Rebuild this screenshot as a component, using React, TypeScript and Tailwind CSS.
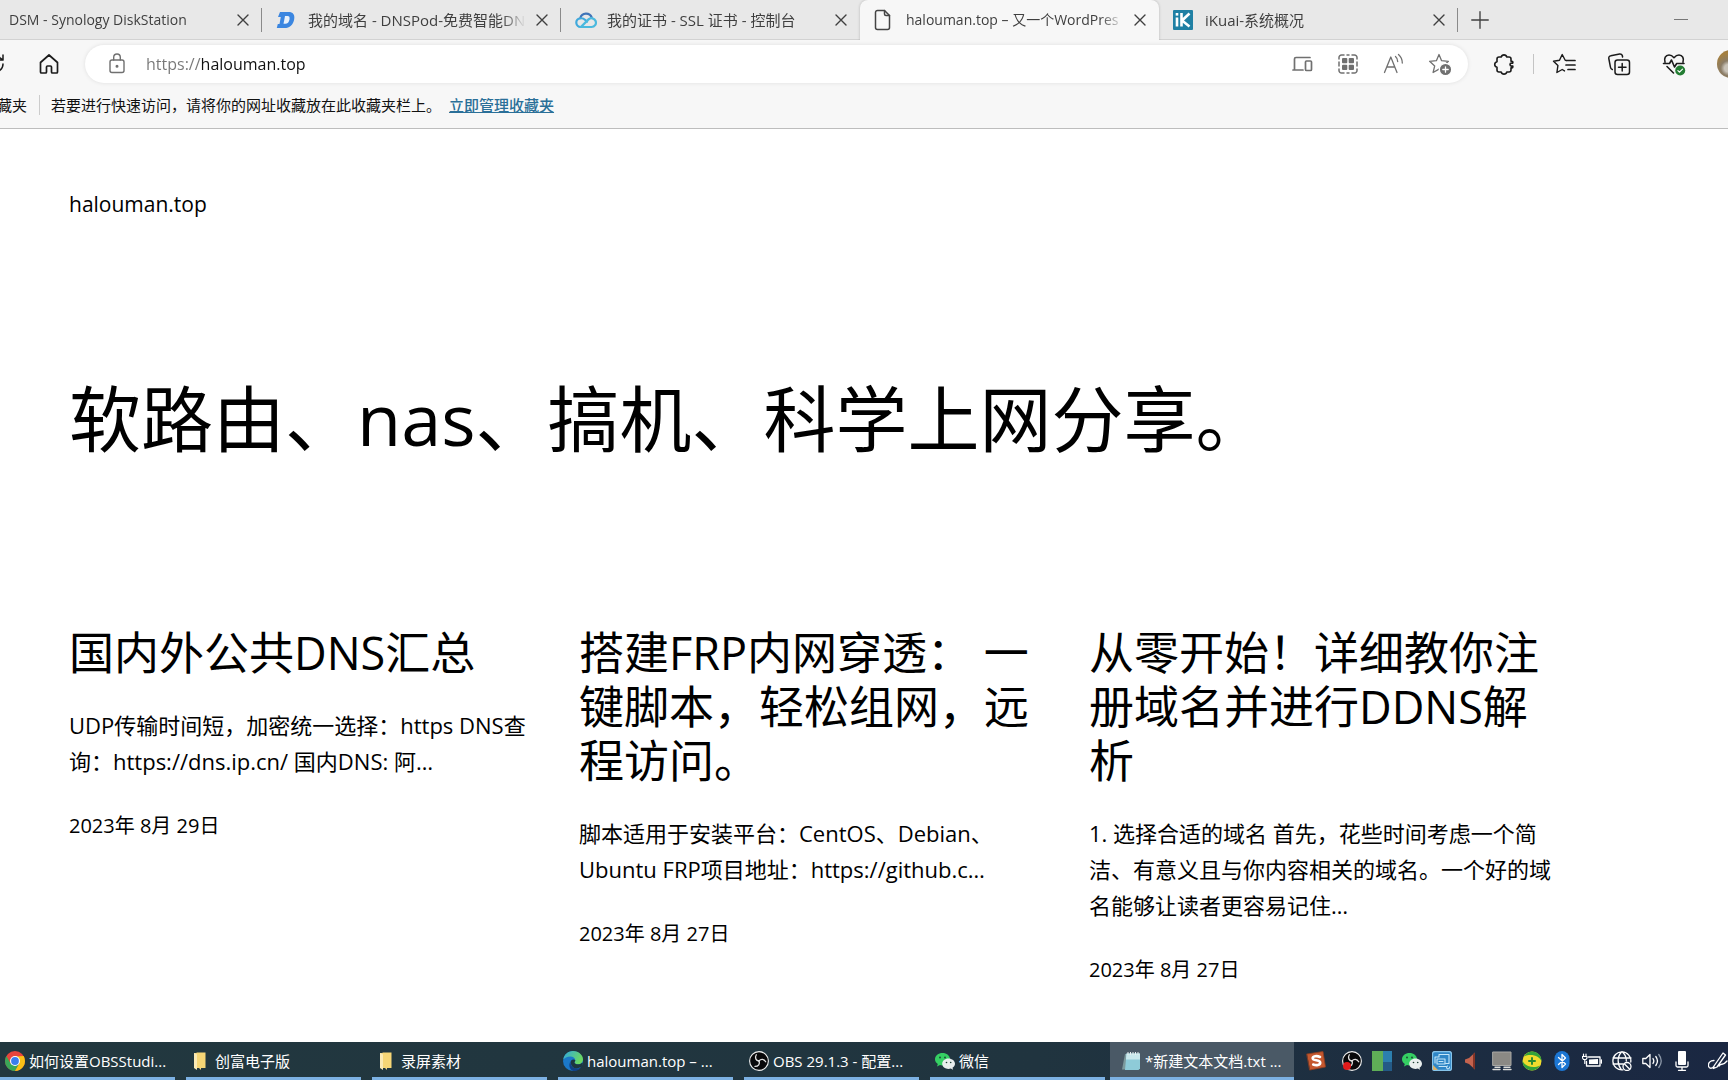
import React from "react";
import type { ReactNode } from "react";

type IconProps = { className?: string };

const line = { fill: "none", stroke: "currentColor", strokeLinecap: "round", strokeLinejoin: "round" } as const;

/* ---------- Tab icons ---------- */

const DnspodIcon = () => (
  <svg viewBox="0 0 20 20" className="size-5" aria-hidden="true">
    <path d="M4 2h8.500c4.500 0 6.500 2.700 5.700 7.200C17.200 15 13.800 18 8.500 18H.8l1-4h1.700l1.300-7H2z" fill="#3b86e0" />
    <path d="M9 6h2.500c1.800 0 2.300 1.200 2 3.200-.5 3-1.900 4.600-4.300 4.600H7.500z" fill="#e8f1fb" />
  </svg>
);

const CloudIcon = () => (
  <svg viewBox="0 0 22 20" className="h-5 w-[22px]" fill="none" strokeWidth="2.200" strokeLinecap="round" aria-hidden="true">
    <path d="M5.300 8A6 6 0 0 1 16.700 7.500" stroke="#3f74b8" />
    <path d="M6 17a4.300 4.300 0 0 1-.7-8.700c2-.3 3.700.5 5 1.700l1.700 1.700" stroke="#3fa9dc" />
    <path d="M6 17h10.500a4.400 4.400 0 1 0-3-7.600z" stroke="#4bb9de" />
  </svg>
);

const PageIcon = () => (
  <svg viewBox="0 0 18 22" className="h-[22px] w-[18px] text-[#444]" {...line} strokeWidth="1.500" aria-hidden="true">
    <path d="M3.500 1.500h7l5 5v12a2 2 0 0 1-2 2h-10a2 2 0 0 1-2-2v-15a2 2 0 0 1 2-2z" />
    <path d="M10.500 1.500v3.500a1.500 1.500 0 0 0 1.500 1.500h3.500" />
  </svg>
);

const IkuaiIcon = () => (
  <svg viewBox="0 0 20 20" className="size-5" aria-hidden="true">
    <rect width="20" height="20" rx="1" fill="#2080a4" />
    <path d="M4 7.500v9M8.500 3v13.500M16.500 3.500l-7.500 7 7.500 6" fill="none" stroke="#fff" strokeWidth="2.600" />
    <rect x="2.700" y="3" width="2.600" height="2.600" fill="#fff" />
  </svg>
);

const Cross = () => (
  <svg viewBox="0 0 12 12" className="size-3" {...line} strokeWidth="1.400" aria-hidden="true">
    <path d="M1 1l10 10M11 1L1 11" />
  </svg>
);

/* ---------- Toolbar icons ---------- */

const Svg = ({ children, className = "size-6", sw = 1.5 }: { children: ReactNode; className?: string; sw?: number }) => (
  <svg viewBox="0 0 24 24" className={className} {...line} strokeWidth={sw} aria-hidden="true">
    {children}
  </svg>
);

const ReloadIcon = () => (
  <Svg>
    <path d="M20 12a8 8 0 1 1-3-6.200L20 8M20 3v5h-5" />
  </Svg>
);
const HomeIcon = () => (
  <Svg sw={1.7}>
    <path d="M3.500 10.500L12 3l8.500 7.500V20a1 1 0 0 1-1 1h-4a1 1 0 0 1-1-1v-5a1 1 0 0 0-1-1h-3a1 1 0 0 0-1 1v5a1 1 0 0 1-1 1h-4a1 1 0 0 1-1-1z" />
  </Svg>
);
const LockIcon = () => (
  <Svg sw={1.4}>
    <rect x="5" y="8" width="14" height="12.500" rx="2" />
    <path d="M8.700 8V5.300a3.300 3.300 0 0 1 6.600 0V8" />
    <circle cx="12" cy="14.300" r=".8" fill="currentColor" />
  </Svg>
);
const DevicesIcon = () => (
  <Svg sw={1.7}>
    <path d="M13 18H3M4.500 17.500V7A1.500 1.500 0 0 1 6 5.500h14" />
    <rect x="15.500" y="9" width="6" height="9.500" rx="1" />
  </Svg>
);
const GridIcon = () => (
  <Svg>
    <path d="M3 7V5.500A2.500 2.500 0 0 1 5.500 3H8M16 3h2.500A2.500 2.500 0 0 1 21 5.500V7M21 17v1.500a2.500 2.500 0 0 1-2.500 2.500H16M8 21H5.500A2.500 2.500 0 0 1 3 18.500V17M3 10v4M21 10v4M11 3h2M11 21h2" />
    <g fill="currentColor" stroke="none">
      <rect x="6" y="6" width="5.300" height="5.300" rx="1" />
      <rect x="12.700" y="6" width="5.300" height="5.300" rx="1" />
      <rect x="6" y="12.700" width="5.300" height="5.300" rx="1" />
      <rect x="12.700" y="12.700" width="5.300" height="5.300" rx="1" />
    </g>
  </Svg>
);
const ReadAloudIcon = () => (
  <Svg sw={1.3}>
    <path d="M2.500 20.500L8.800 5l6.200 15.500M4.700 15h8.100M13.500 4.500c1.500 1.300 2.200 3 2.200 5M16.500 2.500c2.600 2.300 3.800 5 3.800 8.500" />
  </Svg>
);
const STAR = "M11 2.500l2.600 6.200 6.800.6-5 4.600 1.500 6.600-5.900-3.400-5.900 3.400 1.600-6.600-5.100-4.600 6.800-.6z";
const StarAddIcon = () => (
  <Svg sw={1.3}>
    <path d={STAR} />
    <circle cx="17.500" cy="17.500" r="6.200" fill="currentColor" stroke="#fff" />
    <path d="M14.800 17.500h5.400M17.500 14.800v5.400" stroke="#fff" />
  </Svg>
);
const PuzzleIcon = () => (
  <Svg sw={1.6}>
    <path d="M7 5h2.200a2.900 2.900 0 0 1 5.600 0H17a2 2 0 0 1 2 2v2.300h1a.8.800 0 0 1 .8.800v1h-1.300a1.500 1.500 0 0 0 0 3h1.300v1a.8.800 0 0 1-.8.800h-1V18a2 2 0 0 1-2 2h-2.200a2.900 2.900 0 0 1-5.600 0H7a2 2 0 0 1-2-2v-2.800a2.800 2.800 0 0 1 0-5.500V7a2 2 0 0 1 2-2z" />
  </Svg>
);
const FavoritesIcon = () => (
  <Svg sw={1.4}>
    <path d="M14.500 8.500l-1.300-.2L10.200 2.500 7.500 8.300l-6 .9 4.400 4.400-1 6.900 5.300-3 2.300 1.400" />
    <path d="M15 8.500h8M14 13h9M16 17.500h7" strokeWidth="1.700" />
  </Svg>
);
const CollectionsIcon = () => (
  <Svg>
    <rect x="8" y="8" width="14.500" height="14.500" rx="2.500" />
    <path d="M15.200 11.500v7.500M11.500 15.200h7.500M5.300 17.500A2.500 2.500 0 0 1 3.500 15.300L1.800 6.500a2.400 2.400 0 0 1 2-2.800l8.800-1.700a2.400 2.400 0 0 1 2.800 2l.2 1" />
  </Svg>
);
const HealthIcon = () => (
  <Svg sw={1.6}>
    <path d="M3 10C1.800 6.500 3.500 3 7 3c2.200 0 3.700 1.200 5 2.700C13.300 4.200 14.800 3 17 3c3.500 0 5.200 3.500 4 7M5 14.500l6.500 6.500M1.500 11.500h6l2-3.500 3 7 2.200-3.500H22" />
    <circle cx="18.200" cy="18.500" r="5" fill="#237d33" stroke="none" />
    <path d="M15.900 18.600l1.600 1.600 3-3.100" stroke="#fff" strokeWidth="1.200" />
  </Svg>
);

/* ---------- Taskbar icons ---------- */

const ChromeIcon = ({ className = "size-5" }: IconProps) => (
  <svg viewBox="0 0 20 20" className={className} aria-hidden="true">
    <circle cx="10" cy="10" r="10" fill="#e8453c" />
    <path d="M1.340 5A10 10 0 0 0 10 20l4.330-7.500L5.670 12.500z" fill="#3aa757" />
    <path d="M18.660 5A10 10 0 0 1 10 20l4.330-7.500L10 5.500z" fill="#fbc116" />
    <circle cx="10" cy="10" r="5" fill="#fff" />
    <circle cx="10" cy="10" r="3.900" fill="#3b7ded" />
  </svg>
);
const FolderIcon = () => (
  <svg viewBox="0 0 14 20" className="h-5 w-[14px]" aria-hidden="true">
    <path d="M1 2h7v17l-2-2H1z" fill="#f3d98a" />
    <path d="M3.500 1.500h9V17h-9z" fill="#f6d676" />
    <path d="M1 2l3 1.500V19l-3-2z" fill="#fbeab5" />
  </svg>
);
const EdgeIcon = () => (
  <svg viewBox="0 0 20 20" className="size-5" aria-hidden="true">
    <defs>
      <linearGradient id="edge-top" x1="0" y1="0" x2="1" y2=".4">
        <stop offset="0" stopColor="#31a8e0" />
        <stop offset="1" stopColor="#6bd861" />
      </linearGradient>
    </defs>
    <circle cx="10" cy="10" r="10" fill="#1b78c8" />
    <path d="M.3 8.500C1 3.500 5 0 10 0c6 0 10 4.300 10 8.300 0 3-2.200 5-5 5-2 0-3.500-.9-3.500-1.800 0-.7.8-1 .8-2.300C12.300 7 10 5.500 7.300 5.500 4 5.500 1.500 7 .3 8.500z" fill="url(#edge-top)" />
    <path d="M7.800 10c-1 4 2 7.500 6 7.500 2 0 3.800-.8 4.800-1.800-1.500 2.700-4.500 4.300-8.100 4.300-4-1-5.500-6.500-2.700-10z" fill="#123f86" />
    <path d="M12.300 9.200c0 1.300-.8 1.600-.8 2.300 0 .9 1.500 1.800 3.500 1.800 1.500 0 3-.6 3.900-1.600l1 .8-1.500 3.500-4.500 1.500c-4 0-6.800-3.500-6-7.500.8-1.300 3-2 4.400-.8z" fill="#1d3440" />
  </svg>
);

const OBS_BLADE = "M10 10C7.600 9.300 6.300 7.200 7 4.600M10 10c.2-2.300 2-3.600 4.300-3.300";
const ObsIcon = ({ dot = false }: { dot?: boolean }) => (
  <svg viewBox="0 0 20 20" className="size-5" aria-hidden="true">
    <circle cx="10" cy="10" r="9.400" fill="#08080a" stroke="#f0f0f0" strokeWidth="1.100" />
    <g fill="none" stroke="#e2e2e2" strokeWidth="1.300" strokeLinecap="round">
      <path d="M10 10C6.800 9.600 5.600 6.800 7.300 3.800" />
      <path d="M10 10C6.800 9.600 5.600 6.800 7.300 3.800" transform="rotate(120 10 10)" />
      <path d="M10 10C6.800 9.600 5.600 6.800 7.300 3.800" transform="rotate(240 10 10)" />
    </g>
    {dot && <circle cx="5" cy="15" r="4" fill="#e01b1b" />}
  </svg>
);
const WechatIcon = () => (
  <svg viewBox="0 0 20 20" className="size-5" aria-hidden="true">
    <path d="M7.500 2C3.400 2 0 4.700 0 8.200c0 2 1.100 3.700 2.800 4.800L2 15.500l3-1.400c4.500 1.200 10-1.500 10-5.900C15 4.700 11.600 2 7.500 2z" fill="#35cf63" />
    <path d="M13.500 7.500c-3.500 0-6.300 2.300-6.300 5.200s2.800 5.200 6.300 5.200c.8 0 1.600-.1 2.300-.4l2.300 1.200-.6-2c1.500-1 2.500-2.400 2.500-4 0-2.900-3-5.200-6.500-5.200z" fill="#e9eeee" />
    <g fill="#1c4034">
      <circle cx="5" cy="6.500" r=".9" />
      <circle cx="10" cy="6.500" r=".9" />
      <circle cx="11.500" cy="11.500" r=".8" />
      <circle cx="15.700" cy="11.500" r=".8" />
    </g>
  </svg>
);
const NotepadIcon = () => (
  <svg viewBox="0 0 20 20" className="size-5" aria-hidden="true">
    <path d="M4 3L1 18.500h15L18 3z" fill="#7c999c" />
    <path d="M5.500 2.500H19v15l-1.500 1.500H4z" fill="#8ecbd8" />
    <path d="M5.500 2.500H19v6H5z" fill="#c9e8ec" />
    <path d="M7 1v3M9.500 1v3M12 1v3M14.500 1v3M17 1v3" stroke="#e7eff0" strokeWidth="1" />
  </svg>
);

const TrayIcon = ({ children }: { children: ReactNode }) => (
  <svg viewBox="0 0 20 20" className="size-5" fill="none" stroke="#fff" strokeWidth="1.300" strokeLinecap="round" strokeLinejoin="round" aria-hidden="true">
    {children}
  </svg>
);

/* ---------- Data ---------- */

const tabs = [
  { title: "DSM - Synology DiskStation", icon: null, active: false, divider: true, size: "text-sm" },
  { title: "我的域名 - DNSPod-免费智能DN", icon: <DnspodIcon />, active: false, divider: true, size: "text-[15px]" },
  { title: "我的证书 - SSL 证书 - 控制台", icon: <CloudIcon />, active: false, divider: false, size: "text-[15px]" },
  { title: "halouman.top – 又一个WordPres", icon: <PageIcon />, active: true, divider: false, size: "text-sm" },
  { title: "iKuai-系统概况", icon: <IkuaiIcon />, active: false, divider: true, size: "text-[15px]" },
];

const posts = [
  {
    title: "国内外公共DNS汇总",
    excerpt: "UDP传输时间短，加密统一选择：https DNS查询：https://dns.ip.cn/ 国内DNS: 阿…",
    date: "2023年 8月 29日",
    iso: "2023-08-29",
  },
  {
    title: "搭建FRP内网穿透： 一键脚本，轻松组网，远程访问。",
    excerpt: "脚本适用于安装平台：CentOS、Debian、Ubuntu FRP项目地址：https://github.c…",
    date: "2023年 8月 27日",
    iso: "2023-08-27",
  },
  {
    title: "从零开始！详细教你注册域名并进行DDNS解析",
    excerpt: "1. 选择合适的域名 首先，花些时间考虑一个简洁、有意义且与你内容相关的域名。一个好的域名能够让读者更容易记住…",
    date: "2023年 8月 27日",
    iso: "2023-08-27",
  },
];

const windows = [
  { label: "如何设置OBSStudi...", icon: <ChromeIcon />, pad: "pl-[5px] gap-1" },
  { label: "创富电子版", icon: <FolderIcon />, pad: "pl-[7px] gap-2" },
  { label: "录屏素材", icon: <FolderIcon />, pad: "pl-[7px] gap-2" },
  { label: "halouman.top – ...", icon: <EdgeIcon />, pad: "pl-[5px] gap-1" },
  { label: "OBS 29.1.3 - 配置...", icon: <ObsIcon />, pad: "pl-[5px] gap-1" },
  { label: "微信", icon: <WechatIcon />, pad: "pl-[5px] gap-1" },
];

const tray: { name: string; icon: ReactNode }[] = [
  { name: "OBS", icon: <ObsIcon dot /> },
  {
    name: "监视器",
    icon: (
      <TrayIcon>
        <g stroke="none">
          <path d="M0 0h11v20H0z" fill="#5fae57" />
          <path d="M11 0h9v11h-9z" fill="#2c7fae" />
          <path d="M11 11h9v9h-9z" fill="#245a86" />
        </g>
      </TrayIcon>
    ),
  },
  { name: "微信消息", icon: <WechatIcon /> },
  {
    name: "系统工具",
    icon: (
      <TrayIcon>
        <rect x=".5" y=".5" width="19" height="19" rx="2.500" fill="#2f86c6" stroke="#86c4ea" />
        <path d="M3 6h4V3.500h10v9h-3M5 8h8v5H5zM7 10.500h4M3 6v6M7 15.500h7M15.500 15a1.500 1.500 0 1 0 2 1" stroke="#c4e6f8" strokeWidth="1.100" />
        <path d="M1 19v-5l5 5z" fill="#d9b26a" stroke="none" />
      </TrayIcon>
    ),
  },
  {
    name: "音频",
    icon: (
      <TrayIcon>
        <path d="M3 8.500l4-1.500 6-5.500v17L7 13l-4-1.500z" fill="#c4634e" stroke="none" />
        <path d="M11 3.300l2-1.800v17l-2-1.800z" fill="#843427" stroke="none" />
      </TrayIcon>
    ),
  },
  {
    name: "显示器",
    icon: (
      <TrayIcon>
        <path d="M1 1h18v13.500H1z" fill="#8b8984" stroke="#a9a8a4" strokeWidth="1" />
        <path d="M1 18.500h7M11.500 18.500H19M3 16.300h5M12 16.300h6" stroke="#dcdcd9" strokeWidth="1.400" />
      </TrayIcon>
    ),
  },
  {
    name: "360",
    icon: (
      <TrayIcon>
        <circle cx="10" cy="10" r="9.500" fill="#f1dc2e" stroke="none" />
        <path d="M2 5.500C6-1.500 15-.5 18.500 5.500 19.500 8 19.500 9 19.400 10.500 18 5 9 2 2 5.500zM18 14.500c-4 7-13 6-16.500 0C.5 12 .5 11 .6 9.500 2 15 11 18 18 14.500z" fill="#35a33a" stroke="none" />
        <path d="M10 7v6M7 10h6" stroke="#2a8a30" strokeWidth="2" />
      </TrayIcon>
    ),
  },
  {
    name: "蓝牙",
    icon: (
      <TrayIcon>
        <rect x="2.500" width="15" height="20" rx="7.500" fill="#1c76d3" stroke="none" />
        <path d="M6.500 6.500l7 6.500-3.500 3.500v-13l3.500 3.500-7 6.500" />
      </TrayIcon>
    ),
  },
  {
    name: "电池",
    icon: (
      <TrayIcon>
        <path d="M6.500 6h11.500v9H4.500v-4.500M19.500 9v3" />
        <path d="M7 8.500l9-.5v5H7z" fill="#fff" stroke="none" />
        <path d="M1.500 3v2.500M4 3v2.500M.5 5.500H5v1.500L4 8.500H1.500L.5 7zM2.800 8.500v4" strokeWidth="1.200" />
      </TrayIcon>
    ),
  },
  {
    name: "网络",
    icon: (
      <TrayIcon>
        <path d="M11 18.800A9 9 0 1 1 18.800 11M1 7h18M1 13h10M9.500 1C5 6 5 13.500 9.500 18.800M10.500 1c3 3 4 6 3.800 9" />
        <circle cx="15" cy="15.500" r="4" />
        <path d="M12.300 12.800l5.400 5.400" />
      </TrayIcon>
    ),
  },
  {
    name: "音量",
    icon: (
      <TrayIcon>
        <path d="M.8 7.500h3L8 3.500v13l-4.200-4h-3zM11 7.500c1 1.500 1 3.500 0 5M13.800 5.500c2 2.700 2 6.300 0 9" />
        <path d="M16.800 3.500c3 4 3 9 0 13" stroke="#8c98a8" />
      </TrayIcon>
    ),
  },
  {
    name: "麦克风",
    icon: (
      <TrayIcon>
        <rect x="6" y="0" width="8" height="14" rx="1" fill="#fff" stroke="none" />
        <path d="M4 11v3.500a1.500 1.500 0 0 0 1.500 1.500h9a1.500 1.500 0 0 0 1.500-1.500V11M10 16v3M6.500 19.300h7" />
      </TrayIcon>
    ),
  },
];

const pill = [
  { name: "发送到设备", icon: <DevicesIcon /> },
  { name: "应用", icon: <GridIcon /> },
  { name: "大声朗读", icon: <ReadAloudIcon /> },
  { name: "添加到收藏夹", icon: <StarAddIcon /> },
];

/* ---------- Sections ---------- */

function TabStrip() {
  return (
    <div className="flex h-10 shrink-0 items-stretch border-b border-[#d2d2d2] bg-[#e8e8e8] text-[#3f3f3f]">
      <div className="-ml-[37px] flex shrink-0" role="tablist">
        {tabs.map((t) => (
          <div
            key={t.title}
            className={
              t.active
                ? "-mb-px flex w-[299px] items-center rounded-t-lg bg-[#f7f7f7] pr-[13px] pl-[14px] shadow-[0_0_3px_rgba(0,0,0,0.22)] [clip-path:inset(0_-4px_0_-4px)]"
                : "flex w-[299px] items-center pr-[13px] pl-[14px]"
            }
          >
            <button role="tab" aria-selected={t.active} className="flex min-w-0 flex-1 items-center text-left">
              <span className="flex w-8 shrink-0">{t.icon}</span>
              <span
                className={`${t.size} flex-1 overflow-hidden leading-6 whitespace-nowrap [mask-image:linear-gradient(to_right,#000_calc(100%-24px),transparent)]`}
              >
                {t.title}
              </span>
            </button>
            <button aria-label="关闭标签页" className="ml-[10px] flex size-3 items-center justify-center">
              <Cross />
            </button>
            <span className={t.divider ? "-mr-[13px] ml-3 h-6 w-px bg-[#8a8a8a]" : "-mr-[13px] ml-3 w-px"} />
          </div>
        ))}
      </div>
      <button aria-label="新建标签页" className="ml-[13px] flex items-center">
        <Svg className="size-[18px]" sw={1.8}>
          <path d="M12 1v22M1 12h22" />
        </Svg>
      </button>
      <button aria-label="最小化" className="mr-10 ml-auto flex items-center text-[#777]">
        <span className="h-px w-[14px] bg-current" />
      </button>
    </div>
  );
}

function Toolbar() {
  return (
    <div className="flex h-12 shrink-0 items-center bg-[#f7f7f7] text-[#1b1b1b]">
      <button aria-label="刷新" className="-ml-[17px] flex">
        <ReloadIcon />
      </button>
      <button aria-label="主页" className="ml-[30px] flex">
        <HomeIcon />
      </button>
      <div className="ml-6 flex h-[38px] min-w-0 flex-1 items-center rounded-full bg-white pr-4 pl-5 text-[#707070] shadow-[0_0_4px_rgba(0,0,0,0.1)]">
        <button aria-label="网站信息" className="flex">
          <LockIcon />
        </button>
        <input
          aria-label="地址栏"
          defaultValue="https://halouman.top"
          className="ml-[17px] min-w-0 flex-1 bg-[linear-gradient(90deg,#777_56px,#111_56px)] bg-clip-text text-base text-transparent outline-none"
        />
        <div className="flex gap-[22px]">
          {pill.map((p) => (
            <button key={p.name} aria-label={p.name} className="flex">
              {p.icon}
            </button>
          ))}
        </div>
      </div>
      <button aria-label="扩展" className="ml-6 flex">
        <PuzzleIcon />
      </button>
      <span className="ml-[17px] h-5 w-px bg-[#c4c4c4]" />
      <div className="ml-[18px] flex gap-[31px]">
        <button aria-label="收藏夹" className="flex">
          <FavoritesIcon />
        </button>
        <button aria-label="集锦" className="flex">
          <CollectionsIcon />
        </button>
        <button aria-label="浏览器概要" className="flex">
          <HealthIcon />
        </button>
      </div>
      <div className="ml-[31px] w-[11px] shrink-0 overflow-hidden">
        <button
          aria-label="个人资料"
          className="block size-7 rounded-full bg-[radial-gradient(circle_at_40%_65%,#c9c3b8_0_15%,#8a7c66_30%,#a5803f_60%,#8f6a3a)]"
        />
      </div>
    </div>
  );
}

function FavoritesBar() {
  return (
    <div className="flex h-[41px] shrink-0 items-center border-b border-[#bdbdbd] bg-[#f7f7f7] pb-1.5 text-[15px] leading-6 whitespace-nowrap text-[#111]">
      <span className="-ml-[3px]">藏夹</span>
      <span className="mr-[11px] ml-3 h-5 w-px bg-[#cccccc]" />
      <span>若要进行快速访问，请将你的网址收藏放在此收藏夹栏上。</span>
      <a href="#manage" className="ml-2 font-medium text-[#2a6f98] underline">
        立即管理收藏夹
      </a>
    </div>
  );
}

function Taskbar() {
  return (
    <footer className="flex h-[38px] shrink-0 items-stretch overflow-hidden bg-linear-to-r from-[#22383f] via-[#20343f] via-60% to-[#1a2742] text-[15px] whitespace-nowrap text-white">
      <div className="flex shrink-0 gap-[11px]">
        {windows.map((w) => (
          <button key={w.label} className={`${w.pad} flex w-[175px] items-center shadow-[inset_0_-3px_#7cb1e3]`}>
            {w.icon}
            <span>{w.label}</span>
          </button>
        ))}
      </div>
      <button className="ml-[5px] flex w-[184px] shrink-0 items-center gap-1 bg-[#4a5966] pl-[11px] shadow-[inset_0_-3px_#7cb1e3]">
        <NotepadIcon />
        <span>*新建文本文档.txt ...</span>
      </button>
      <button aria-label="搜狗输入法" className="ml-3 flex items-center">
        <TrayIcon>
          <path d="M1 3L17 .5 19.500 16 4 19z" fill="#c5582f" stroke="#8f3d20" strokeWidth=".8" />
          <path d="M14 6c-3-1.500-7.500-1-7.300 1.300C7 10 14 8.500 14.200 11.500c.2 2.700-4 3.200-7 2" strokeWidth="2.600" />
        </TrayIcon>
      </button>
      <div className="ml-4 flex flex-1 items-center justify-between">
        {tray.map((t) => (
          <button key={t.name} aria-label={t.name} className="flex">
            {t.icon}
          </button>
        ))}
      </div>
      <button aria-label="手写笔" className="ml-4 flex w-5 shrink-0 items-center">
        <TrayIcon>
          <path d="M6 9.500c-4 0-6 2.500-5.500 5.500s4 3 5.500 0M6 15L15 2l2.500 2L9 16 5.500 17.500zM11 15c3-4 3 1 8-5" />
        </TrayIcon>
      </button>
    </footer>
  );
}

export default function App() {
  return (
    <div className="flex h-screen flex-col overflow-hidden bg-white font-['Open_Sans','Noto_Sans_CJK_SC',sans-serif] text-black">
      <TabStrip />
      <Toolbar />
      <FavoritesBar />
      <main className="min-h-0 flex-1 overflow-hidden pl-[69px]">
        <header className="pt-[57px]">
          <a href="#home" className="text-[21px] leading-9">
            halouman.top
          </a>
        </header>
        <h1 className="mt-[152px] text-[72px] leading-[88px]">软路由、nas、搞机、科学上网分享。</h1>
        <div className="mt-[164px] grid max-w-[1504px] grid-cols-3 gap-x-[26px]">
          {posts.map((p) => (
            <article key={p.title}>
              <h2 className="pr-4 text-[45px] leading-[54px]">
                <a href="#post">{p.title}</a>
              </h2>
              <p className="mt-[27px] pr-5 text-[22px] leading-9">{p.excerpt}</p>
              <time dateTime={p.iso} className="mt-[31px] block text-[20px] leading-8">
                {p.date}
              </time>
            </article>
          ))}
        </div>
      </main>
      <Taskbar />
    </div>
  );
}
